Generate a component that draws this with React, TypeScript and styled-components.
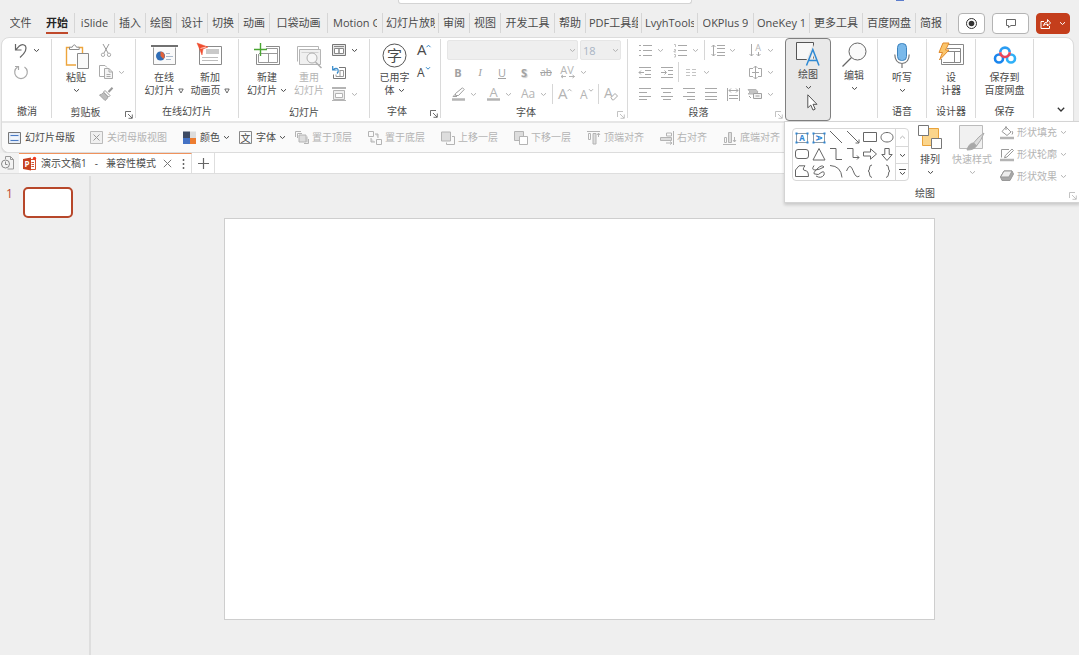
import React from 'react';
import styled, { createGlobalStyle, css } from 'styled-components';

const Global = createGlobalStyle`
  * { box-sizing: border-box; }
  html, body { margin: 0; background: #efefef; overflow-x: hidden; }
  body, button, select {
    font-family: "Open Sans", "Noto Sans CJK SC", sans-serif;
    font-size: 10px;
    line-height: 13px;
    color: #4a4a4a;
  }
  button { border: 0; padding: 0; margin: 0; background: none; white-space: nowrap; }
  button:disabled { color: #b4b4b4; }
`;

/* ---------- icon base ---------- */

const Svg = styled.svg`
  display: block;
  flex: none;
  fill: none;
  stroke: currentColor;
  stroke-width: 1;
  overflow: visible;
  text {
    stroke: none;
    fill: currentColor;
  }
`;

type IconProps = { w: number; h: number; children: React.ReactNode };
const Icon = ({ w, h, children }: IconProps) => (
  <Svg width={w} height={h} viewBox={`0 0 ${w} ${h}`} aria-hidden="true">
    {children}
  </Svg>
);

const Chevron = () => (
  <Icon w={7} h={5}>
    <path d="M1 1.2l2.5 2.3L6 1.2" />
  </Icon>
);
const Triangle = () => (
  <Icon w={6} h={6}>
    <path d="M.8 1h4.4L3 5z" strokeWidth=".8" />
  </Icon>
);

/* ---------- page frame ---------- */

const Page = styled.div`
  min-height: 100vh;
  display: flex;
  flex-direction: column;
`;

const TitleBar = styled.div`
  display: flex;
  height: 12px;
`;
const TitleSide = styled.div<{ $grow: number }>`
  flex: ${(p) => p.$grow} 1 0;
`;
const SearchEdge = styled.div`
  flex: 0 0 294px;
  height: 4px;
  background: #fff;
  border: 1px solid #d4d4d4;
  border-top: 0;
  border-radius: 0 0 3px 3px;
`;
const Avatar = styled.div`
  width: 8px;
  height: 1px;
  margin-left: 204px;
  background: #5b7ccc;
`;

const TabRow = styled.nav`
  display: flex;
  align-items: flex-start;
  height: 25px;
  padding: 1px 9px 0 1px;
`;
const Tab = styled.button<{ $w: number; $clip: number; $line: boolean; $active?: boolean }>`
  flex: 0 0 ${(p) => p.$w}px;
  height: 20px;
  font-size: 11px;
  line-height: 20px;
  display: flex;
  justify-content: center;
  border-right: ${(p) => (p.$line ? '1px solid #d6d6d6' : '0')};
  ${(p) =>
    p.$active &&
    css`
      font-weight: 700;
      color: #262626;
      span { border-bottom: 2px solid #c0492b; }
    `}
  span {
    display: block;
    height: 21px;
    max-width: ${(p) => p.$clip}px;
    overflow: hidden;
  }
`;
const WindowActions = styled.div`
  display: flex;
  gap: 7px;
  margin-left: auto;
`;
const ActionButton = styled.button<{ $w: number; $primary?: boolean }>`
  display: flex;
  align-items: center;
  justify-content: center;
  gap: 8px;
  width: ${(p) => p.$w}px;
  height: 21px;
  border-radius: 4px;
  border: 1px solid ${(p) => (p.$primary ? '#c43e1c' : '#b4b4b4')};
  background: ${(p) => (p.$primary ? '#c43e1c' : '#fff')};
  color: ${(p) => (p.$primary ? '#fff' : '#333')};
`;

const RibbonCard = styled.section`
  margin: 0 5px 0 1px;
  background: #fff;
  border: 1px solid #dcdcdc;
  border-radius: 8px;
  box-shadow: 0 1px 1px rgba(0, 0, 0, 0.08);
`;
const Groups = styled.div`
  display: flex;
  height: 83px;
  padding-left: 1px;
`;
const GroupBox = styled.div<{ $w: number; $line: boolean }>`
  flex: 0 0 ${(p) => p.$w}px;
  display: flex;
  flex-direction: column;
  margin: 1px 0 3px;
  border-right: ${(p) => (p.$line ? '1px solid #dadada' : '0')};
`;
const GroupBody = styled.div<{ $pad: number; $center: boolean }>`
  display: flex;
  height: 66px;
  padding-left: ${(p) => p.$pad}px;
  justify-content: ${(p) => (p.$center ? 'center' : 'flex-start')};
`;
const GroupFoot = styled.div`
  display: flex;
  align-items: center;
  padding-top: 1px;
  span { flex: 1; text-align: center; }
`;
const Launcher = styled.button`
  flex: 0 0 16px;
  display: flex;
  justify-content: center;
  padding: 4px 0 0 3px;
`;
const LauncherIcon = () => (
  <Icon w={8} h={8}>
    <path d="M.5 6V.5H6M3 3l4 4M7.3 3.500v3.800H3.500" strokeWidth=".8" />
  </Icon>
);

type GroupProps = {
  w: number;
  label?: string;
  pad?: number;
  center?: boolean;
  line?: boolean;
  launcher?: 'on' | 'off';
  children: React.ReactNode;
};
const Group = ({ w, label, pad = 0, center = false, line = true, launcher, children }: GroupProps) => (
  <GroupBox $w={w} $line={line}>
    <GroupBody $pad={pad} $center={center}>{children}</GroupBody>
    <GroupFoot>
      <span>{label}</span>
      {launcher && (
        <Launcher aria-label={`${label}设置`} disabled={launcher === 'off'}>
          <LauncherIcon />
        </Launcher>
      )}
    </GroupFoot>
  </GroupBox>
);

const BigButton = styled.button<{ $w: number; $tight?: boolean }>`
  width: ${(p) => p.$w}px;
  padding-top: 4px;
  display: flex;
  flex-direction: column;
  align-items: center;
  > div {
    height: ${(p) => (p.$tight ? 26 : 28)}px;
    flex: none;
  }
`;
const Line = styled.span`
  display: flex;
  align-items: center;
  justify-content: center;
  gap: 3px;
  height: 13px;
`;

const Stack = styled.div`
  display: flex;
  flex-direction: column;
`;
const Row = styled.div`
  display: flex;
  align-items: center;
  height: 22px;
`;
const Small = styled.button<{ $caret?: boolean }>`
  display: grid;
  grid-template-columns: 22px ${(p) => (p.$caret ? '8px' : '')};
  place-items: center;
  height: 22px;
  margin-right: ${(p) => (p.$caret ? 5 : 0)}px;
`;
const Divider = styled.div`
  width: 1px;
  height: 20px;
  margin-right: 1px;
  background: #d6d6d6;
`;
const Combo = styled.div<{ $w: number }>`
  display: grid;
  width: ${(p) => p.$w}px;
  height: 20px;
  margin-right: 2px;
  align-items: center;
  color: #b4b4b4;
  select {
    grid-area: 1 / 1;
    appearance: none;
    width: 100%;
    height: 20px;
    padding: 0 2px;
    border: 1px solid #e6e6e6;
    border-radius: 2px;
    background: #efefef;
    color: #a8b4c4;
    opacity: 1;
    font-size: 11px;
  }
  svg { grid-area: 1 / 1; justify-self: end; margin-right: 2px; }
`;
const Letter = styled.span<{ $kind: 'b' | 'i' | 'u' | 's' | 'ab' }>`
  font-size: ${(p) => (p.$kind === 'ab' ? 10 : 11)}px;
  color: #a2a2a2;
  font-weight: ${(p) => (p.$kind === 'b' || p.$kind === 's' ? 700 : 400)};
  font-style: ${(p) => (p.$kind === 'i' ? 'italic' : 'normal')};
  font-family: ${(p) => (p.$kind === 'i' ? '"Liberation Serif", serif' : 'inherit')};
  text-decoration: ${(p) => (p.$kind === 'u' ? 'underline' : p.$kind === 'ab' ? 'line-through' : 'none')};
  text-shadow: ${(p) => (p.$kind === 's' ? '1px 1px 1px #ccc' : 'none')};
`;

/* ---------- drawing button and flyout ---------- */

const DrawingWrap = styled.div`
  position: relative;
  flex: 0 0 46px;
  z-index: 2;
`;
const DrawingButton = styled.button`
  width: 100%;
  height: 83px;
  padding-top: 3px;
  display: flex;
  flex-direction: column;
  align-items: center;
  background: #e9e9e9;
  border: 1px solid #808080;
  border-radius: 4px;
  > div { height: 26px; flex: none; }
  > svg:last-child { margin: 0 0 0 8px; }
`;
const Flyout = styled.div`
  position: absolute;
  top: 100%;
  left: -1px;
  width: 296px;
  height: 82px;
  padding-left: 7px;
  background: #fff;
  border: 1px solid #d4d4d4;
  box-shadow: 0 2px 3px rgba(0, 0, 0, 0.16);
`;
const FlyoutBody = styled.div`
  display: flex;
  align-items: flex-start;
  height: 65px;
`;
const Gallery = styled.div`
  display: flex;
  height: 53px;
  margin-top: 6px;
  border: 1px solid #d8d8d8;
  border-radius: 4px;
`;
const Shapes = styled.div`
  display: grid;
  grid-template-columns: repeat(6, 17px);
  grid-auto-rows: 17px;
  button { display: grid; place-items: center; color: #666; }
`;
const Scroller = styled.div`
  display: grid;
  grid-template-rows: repeat(3, 17px);
  width: 13px;
  border-left: 1px solid #d8d8d8;
  button { display: grid; place-items: center; }
  button + button { border-top: 1px solid #d8d8d8; }
`;
const FlyoutBig = styled.button<{ $w: number }>`
  width: ${(p) => p.$w}px;
  padding-top: 3px;
  display: flex;
  flex-direction: column;
  align-items: center;
  > div { height: 28px; flex: none; }
  > svg { margin-top: 4px; }
`;
const Effects = styled.div`
  display: flex;
  flex-direction: column;
  gap: 2px;
  padding-left: 7px;
`;
const Effect = styled.button`
  display: flex;
  align-items: center;
  gap: 3px;
  height: 20px;
`;
const FlyoutFoot = styled.div`
  display: flex;
  align-items: center;
  justify-content: space-between;
  padding-left: 123px;
`;

/* ---------- quick toolbar ---------- */

const QuickBar = styled.div`
  display: flex;
  align-items: center;
  height: 31px;
  padding-left: 6px;
  border-top: 2px solid #e6e6e6;
  border-radius: 0 0 8px 8px;
  background: #fafafa;
`;
const QuickItem = styled.button<{ $space: number }>`
  display: flex;
  align-items: center;
  gap: 3px;
  height: 20px;
  margin-right: ${(p) => p.$space}px;
`;

/* ---------- document tabs and workspace ---------- */

const DocBar = styled.div`
  display: flex;
  align-items: center;
  height: 21px;
  background: #fff;
  border-bottom: 1px solid #dedede;
`;
const HistoryButton = styled.button`
  flex: 0 0 19px;
  height: 20px;
  display: flex;
  align-items: center;
  padding-left: 1px;
  background: #f3f3f3;
`;
const DocTab = styled.div`
  display: flex;
  align-items: center;
  width: 173px;
  height: 20px;
  padding: 0 6px 0 4px;
  border-top: 1px solid #f0925c;
  border-right: 1px solid #dedede;
`;
const DocName = styled.button`
  display: flex;
  align-items: center;
  gap: 8px;
  margin: 0 auto 0 5px;
`;
const AddDoc = styled.button`
  width: 23px;
  height: 20px;
  display: grid;
  place-items: center;
  border-right: 1px solid #dedede;
  color: #666;
`;
const Workspace = styled.main`
  flex: 1;
  display: flex;
  padding-top: 2px;
`;
const ThumbPane = styled.aside`
  flex: 0 0 91px;
  display: flex;
  align-items: flex-start;
  gap: 10px;
  padding: 11px 0 0 6px;
  border-right: 2px solid #dedede;
  color: #c0472c;
  font-size: 12px;
`;
const Thumb = styled.button`
  width: 50px;
  height: 31px;
  background: #fff;
  border: 2px solid #b7472a;
  border-radius: 5px;
`;
const Stage = styled.div`
  flex: 1;
  padding: 42px 144px 34px 133px;
`;
const Slide = styled.div`
  aspect-ratio: 711 / 402;
  background: #fff;
  border: 1px solid #cecece;
`;

/* ---------- icons ---------- */

const g = '#8a8a8a';

const PasteIcon = () => (
  <Icon w={24} h={26}>
    <path d="M5 4.500H1.500v17.500H11M13.500 4.500h4V11" stroke="#eda53c" strokeWidth="1.400" />
    <path d="M4.500 6.500V4.200h2.700Q9.300 -.5 11.500 4.200h2.700v2.300z" stroke={g} fill="#fff" />
    <path d="M12.500 10.500h11v15h-11z" stroke={g} fill="#fafafa" />
  </Icon>
);
const OnlineIcon = () => (
  <Icon w={27} h={21}>
    <path d="M2.500 2.500v17h22v-17" stroke="#9a9a9a" fill="#fafafa" />
    <path d="M0 1h27" stroke="#707070" strokeWidth="2" />
    <circle cx="9.500" cy="11" r="4.500" fill="#2f6db5" stroke="none" />
    <path d="M9.500 11V6.500A4.500 4.500 0 0 1 12.500 14z" fill="#e2623a" stroke="none" />
    <path d="M15 8.500h4M15 11.500h7M15 14.500h5" stroke="#a9b9cc" />
  </Icon>
);
const AnimPageIcon = () => (
  <Icon w={26} h={24}>
    <path d="M2.500 3.500h22v18h-22z" stroke={g} fill="#fff" />
    <path d="M9 6h13v5H9z" fill="#c9c9c9" stroke="none" />
    <path d="M5 14.500h16M5 17.500h16" stroke="#bdbdbd" />
    <path d="M0 0l11 4-5 2-1 6-2-5z" fill="#f04e30" stroke="#f04e30" strokeWidth=".5" />
    <path d="M3.500 5.500L9 4" stroke="#fff" strokeWidth=".7" />
  </Icon>
);
const NewSlideIcon = () => (
  <Icon w={26} h={24}>
    <path d="M12 3.500h13.500v18h-23V11" stroke={g} />
    <path d="M4.500 11v8.500h19v-14H12M5 10.500h18.500M14.500 10.500v9" stroke="#999" />
    <path d="M6.500 0v13M0 6.500h13" stroke="#4aa532" strokeWidth="1.400" />
  </Icon>
);
const ReuseIcon = () => (
  <Icon w={25} h={22}>
    <path d="M.5 15.500V.5h21V3" stroke="#b5b5b5" />
    <path d="M2.500 3.500h21v15h-21z" fill="#f0f0f0" stroke="#b5b5b5" />
    <path d="M4.500 6.500h17M12.500 6.500v10" stroke="#d2d2d2" />
    <circle cx="15" cy="12" r="5" fill="#f7f7f7" stroke="#b0b0b0" />
    <path d="M18.500 16l6 6" stroke="#b0b0b0" strokeWidth="1.500" />
  </Icon>
);
const LayoutIcon = () => (
  <Icon w={14} h={12}>
    <path d="M.5 .5h13v11H.5z" stroke="#777" fill="#e6e6e6" />
    <path d="M2.500 4.500h4.500v5H2.500zM7 4.500h4.500v5H7z" stroke="#888" fill="#fff" />
    <path d="M2 2.500h10" stroke="#888" />
  </Icon>
);
const ResetIcon = () => (
  <Icon w={14} h={13}>
    <path d="M7 1.500h6.500v11H1.500V8.500" stroke="#777" />
    <path d="M7.500 4.500h4v6H4v-2M8 4.500v6" stroke="#999" />
    <path d="M.7 0v4h4M1 4Q4 .8 6 3.500 6.800 5.500 5 7.500" stroke="#2f86c8" strokeWidth="1.200" />
  </Icon>
);
const SectionIcon = () => (
  <Icon w={14} h={14}>
    <path d="M0 1h14" stroke="#b4b4b4" strokeWidth="2" />
    <path d="M1.500 3.500h11v9h-11z" stroke="#b4b4b4" fill="#eee" />
    <path d="M3.500 6.500h7v4h-7z" stroke="#b4b4b4" fill="#fff" />
    <path d="M0 13.500h14" stroke="#b4b4b4" />
  </Icon>
);
const UsedFontIcon = () => (
  <Icon w={25} h={25}>
    <circle cx="12.500" cy="12.500" r="11.500" stroke="#555" />
    <text x="12.500" y="18" fontSize="15" textAnchor="middle">字</text>
  </Icon>
);

type GlyphProps = { size: number; up: boolean; blue?: boolean };
const SizedA = ({ size, up, blue }: GlyphProps) => (
  <Icon w={14} h={13}>
    <text x="0" y="11" fontSize={size}>A</text>
    <path d={up ? 'M9.500 3.200l2-2 2 2' : 'M9 1.200l2 2 2-2'} stroke={blue ? '#2f86c8' : 'currentColor'} />
  </Icon>
);

const lineSets: Record<string, string> = {
  left: 'M0 .5h12M0 4.500h8M0 8.500h12M0 11.500h8',
  center: 'M0 .5h12M2 4.500h8M0 8.500h12M2 11.500h8',
  right: 'M0 .5h12M4 4.500h8M0 8.500h12M4 11.500h8',
  justify: 'M0 .5h12M0 4.500h12M0 8.500h12M0 11.500h12',
  bullets: 'M4 1.500h9M4 6.500h9M4 11.500h9M0 1.500h2M0 6.500h2M0 11.500h2',
  spacing: 'M6 1.500h8M6 4.500h8M6 8.500h8M6 11.500h8M2.500 1v11M.5 3l2-2 2 2M.5 10l2 2 2-2',
  outdent: 'M0 1.500h12M6 4.500h6M6 8.500h6M0 11.500h12M0 6.500h5M2 4.500l-2 2 2 2',
  indent: 'M0 1.500h12M7 4.500h5M7 8.500h5M0 11.500h12M0 6.500h5M3.500 4.500l2 2-2 2',
  columns: 'M1 3.500h4M1 6.500h4M1 9.500h4M7 3.500h4M7 6.500h4M7 9.500h4',
  distribute: 'M.5 0v13M12.500 0v13M2 2.500h9M4 .5l-2 2 2 2M9 .5l2 2-2 2M2 7.500h9M2 10.500h9',
  valign: 'M4 2.500H.5v8H4M9 2.500h3.500v8H9M6.500 0v13M4.500 2l2-2 2 2M4.500 11l2 2 2-2M3 6.500h7',
};
const Lines = ({ name }: { name: string }) => (
  <Icon w={13} h={13}>
    <path d={lineSets[name]} stroke={name === 'columns' ? '#c4c4c4' : '#a8a8a8'} />
  </Icon>
);
const NumberIcon = () => (
  <Icon w={13} h={13}>
    <path d="M4 1.500h9M4 6.500h9M4 11.500h9" stroke="#a8a8a8" />
    <path d="M0 .5h1.500v2.500M0 5.500h1.500v1.500H0v1h2M0 10.500h1.500v2.500H0" stroke="#b4b4b4" strokeWidth=".8" />
  </Icon>
);

const DrawIcon = () => (
  <Icon w={24} h={24}>
    <path d="M.5 .5h17v17H.5z" stroke="#555" fill="#f7f7f7" />
    <path d="M10.500 23.500L16.800 7.500 23 23.500M12.700 18.500h8.200" stroke="#e9e9e9" strokeWidth="4" />
    <path d="M10.500 23.500L16.800 7.500 23 23.500M12.700 18.500h8.200" stroke="#2f8ad4" strokeWidth="1.500" />
  </Icon>
);
const CursorIcon = () => (
  <Icon w={11} h={17}>
    <path d="M.8 .8v13l3-2.700 2.200 5 2.200-1-2.200-4.800h4z" fill="#fff" stroke="#555" />
  </Icon>
);
const SearchIcon = () => (
  <Icon w={25} h={25}>
    <circle cx="15.500" cy="8.500" r="8.500" stroke="#666" fill="#fafafa" />
    <path d="M9.500 14.500L.5 23.500" stroke="#666" strokeWidth="1.200" />
  </Icon>
);
const MicIcon = () => (
  <Icon w={16} h={25}>
    <rect x="3.500" y=".5" width="9" height="17" rx="4" fill="#7ab9ea" stroke="#3c82bd" />
    <path d="M.8 11.500Q1 20 8 20.500 15 20 15.200 11.500M8 20.500V25" stroke="#777" strokeWidth="1.200" />
  </Icon>
);
const DesignerIcon = () => (
  <Icon w={26} h={24}>
    <path d="M9 1.500h16.500v20h-22V16M5 19.500h17.500v-14H9M9 8.500h13.500M16.500 8.500v11" stroke="#888" />
    <path d="M5 0L1 9.500h3.500L1.500 17 11 7H7.500L11 0z" fill="#fbc56b" stroke="#e08a2c" />
  </Icon>
);
const BaiduIcon = () => (
  <Icon w={22} h={18}>
    <path d="M6.300 6.300a4.700 4.700 0 0 1 9.400 0" stroke="#2a9cf2" strokeWidth="2.600" />
    <circle cx="5" cy="12.500" r="4" stroke="#1a86ee" strokeWidth="2.600" />
    <circle cx="17" cy="12.500" r="4" stroke="#2fb0f8" strokeWidth="2.600" />
    <path d="M6.300 6.300a4.700 4.700 0 0 0 9.400 0" stroke="#ee4458" strokeWidth="2.600" />
  </Icon>
);

const ArrangeIcon = () => (
  <Icon w={25} h={24}>
    <path d="M4.500 3.500h16v17h-16z" fill="#fbd58b" stroke="#e9a23a" />
    <path d="M.5 .5h10v10H.5zM13.500 13.500h10v10h-10z" fill="#fff" stroke="#777" />
  </Icon>
);
const QuickStyleIcon = () => (
  <Icon w={26} h={26}>
    <path d="M.5 .5h23v23H.5z" fill="#f1f1f1" stroke="#bbb" />
    <path d="M25 8Q20 11 14.500 18l3 3Q22 16 25 8z" fill="#ddd" stroke="#aaa" />
    <path d="M14.500 18Q10 18 8 25q7 0 9.500-4z" fill="#a8a8a8" stroke="#a8a8a8" />
  </Icon>
);
const FillIcon = () => (
  <Icon w={14} h={13}>
    <path d="M6 1l5 5-4 3.500L2 5.500zM6 4V0M12 5q1.500 2 0 3.500" stroke="#999" />
    <path d="M0 12h14" stroke="#b4b4b4" strokeWidth="2.500" />
  </Icon>
);
const OutlineIcon = () => (
  <Icon w={14} h={13}>
    <path d="M9 1.500H1.500v8M12 1l1.500 1.500L7 9l-2.500.8.800-2.300z" stroke="#999" />
    <path d="M0 12h14" stroke="#b4b4b4" strokeWidth="2.500" />
  </Icon>
);
const EffectIcon = () => (
  <Icon w={14} h={12}>
    <path d="M4 1h8l1.500 3-3.500 6.500H2L.5 7z" fill="#a8a8a8" stroke="#999" />
    <path d="M4 1h8L9 7H.5z" fill="#eee" stroke="#999" />
  </Icon>
);

const BlueText = styled.text`
  && { fill: #2f86d4; }
`;
const TextBoxIcon = ({ turned }: { turned?: boolean }) => (
  <Icon w={14} h={12}>
    <path d="M1.500 1.500h11v9h-11z" stroke="#8d9aa6" />
    <path d="M.5 1.500h2M11.500 1.500h2M.5 10.500h2M11.500 10.500h2" stroke="#2f86d4" strokeWidth="2" />
    <BlueText x="7" y="9" fontSize="8" fontWeight="700" textAnchor="middle" transform={turned ? 'rotate(90 7 6)' : undefined}>
      A
    </BlueText>
  </Icon>
);
const shapePaths: [string, string][] = [
  ['直线', 'M1 0l12 12'],
  ['箭头', 'M1 0l12 12M13 8.500v3.500H9.500'],
  ['矩形', 'M.5 1.500h13v9H.5z'],
  ['椭圆', 'M7 1.500c8 0 8 9.500 0 9.500s-8-9.500 0-9.500z'],
  ['圆角矩形', 'M3 1.500h8q2.500 0 2.500 2.500v4q0 2.500-2.500 2.500H3Q.5 10.500 .5 8V4Q.5 1.500 3 1.500z'],
  ['三角形', 'M7 .5l6 11.500H1z'],
  ['肘形连接符', 'M1 .5h6v11h6'],
  ['肘形箭头', 'M1 .5h6v9h6M11 7.500l2 2-2 2'],
  ['右箭头', 'M.5 4h7V.8L13.500 6l-6 5.200V8h-7z'],
  ['下箭头', 'M4.800 .5h4.400v6h3L7 12.500 1.800 6.500h3z'],
  ['任意多边形', 'M.5 11.500V5L4 .8h6Q6.500 5 10 5.500q3.500 0 3.500 6z'],
  ['自由曲线', 'M2 .5Q-1 5 3 5T12 2Q10-1 5 4T3 9q3 2 7-2 3-1 2 3-3 4-8 1'],
  ['弧形', 'M1 .5Q12 1 13 12.500'],
  ['曲线', 'M.5 6Q4-3 7 5.500T13.500 11'],
  ['左大括号', 'M9 0Q6.500 0 6.500 3T5 6q1.500 0 1.500 3T9 12.500'],
  ['右大括号', 'M6 0q2.500 0 2.500 3T10 6Q8.500 6 8.500 9T6 12.500'],
];

/* ---------- data ---------- */

const tabs: { t: string; w: number; clip?: number; line?: boolean; active?: boolean }[] = [
  { t: '文件', w: 39, line: false },
  { t: '开始', w: 35, active: true },
  { t: 'iSlide', w: 40 },
  { t: '插入', w: 31 },
  { t: '绘图', w: 31 },
  { t: '设计', w: 31 },
  { t: '切换', w: 31 },
  { t: '动画', w: 31 },
  { t: '口袋动画', w: 58 },
  { t: 'Motion Go', w: 55, clip: 44 },
  { t: '幻灯片放映', w: 56 },
  { t: '审阅', w: 31 },
  { t: '视图', w: 31 },
  { t: '开发工具', w: 54 },
  { t: '帮助', w: 31 },
  { t: 'PDF工具组', w: 56 },
  { t: 'LvyhTools', w: 56 },
  { t: 'OKPlus 9', w: 56 },
  { t: 'OneKey 1', w: 56 },
  { t: '更多工具', w: 53 },
  { t: '百度网盘', w: 53 },
  { t: '简报', w: 31 },
];

const quickItems: { t: string; off?: boolean; caret?: boolean; icon: React.ReactNode }[] = [
  { t: '幻灯片母版', icon: <><path d="M.5 1.500h12v11H.5z" stroke="#777" fill="#e4ecf7" /><path d="M2.500 4.500h8M2.500 9.500h8" stroke="#4a7ac4" /><path d="M2.500 7h8" stroke="#fff" /></> },
  { t: '关闭母版视图', off: true, icon: <><path d="M.5 .5h12v12H.5z" fill="#f0f0f0" stroke="#bbb" /><path d="M3.500 3.500l6 6M9.500 3.500l-6 6" stroke="#999" /></> },
  { t: '颜色', caret: true, icon: <g stroke="none"><path d="M0 .5h7v6.500H0z" fill="#3d4a63" /><path d="M7 .5h6v6.500H7z" fill="#dcdcdc" /><path d="M0 7h7v6H0z" fill="#4472c4" /><path d="M7 7h6v6H7z" fill="#ed7d31" /></g> },
  { t: '字体', caret: true, icon: <><path d="M.5 .5h12v12H.5z" stroke="#888" /><text x="6.500" y="10.500" fontSize="10" textAnchor="middle">文</text></> },
  { t: '置于顶层', off: true, icon: <><path d="M.5 6V.5H6M2.500 7V2.500H7M9 12.500h4.500V8M12 5.500v6" /><path d="M4 4h7v7H4z" fill="#ddd" /></> },
  { t: '置于底层', off: true, icon: <><path d="M.5 .5h5v5h-5zM8.500 8.500h5v5h-5z" /><path d="M7 3h3v4M3 7v4h4" fill="#ddd" /></> },
  { t: '上移一层', off: true, icon: <><path d="M.5 1h9v9h-9z" fill="#ddd" /><path d="M11 5.500h2.500v8H5.500V11.500" /></> },
  { t: '下移一层', off: true, icon: <><path d="M.5 .5h9v9h-9z" fill="#ddd" /><path d="M5.500 5.500h8v8h-8z" fill="#fff" /></> },
  { t: '顶端对齐', off: true, icon: <><path d="M0 .5h13M1.500 2.500h2v6h-2z" /><path d="M6 2.500h3V13H6z" fill="#ddd" /><path d="M11.500 6V2M10 4l1.500-2L13 4" /></> },
  { t: '右对齐', off: true, icon: <><path d="M13.500 0v14M6.500 2h5v3h-5z" /><path d="M.5 6.500h11v3H.5z" fill="#ddd" /><path d="M6 12h6M10 10.500l2 1.500-2 1.500" /></> },
  { t: '底端对齐', off: true, icon: <><path d="M0 13.500h13M1.500 6.500h2v5h-2z" /><path d="M5.500 1.500h3v10h-3z" fill="#ddd" /><path d="M11.500 6v5M10 9l1.500 2L13 9" /></> },
];

const letters: [string, 'b' | 'i' | 'u' | 's' | 'ab', string][] = [
  ['B', 'b', '加粗'],
  ['I', 'i', '倾斜'],
  ['U', 'u', '下划线'],
  ['S', 's', '文字阴影'],
  ['ab', 'ab', '删除线'],
];

type SmallProps = { label: string; caret?: boolean; off?: boolean; children: React.ReactNode };
const SmallButton = ({ label, caret, off = true, children }: SmallProps) => (
  <Small aria-label={label} disabled={off} $caret={caret}>
    {children}
    {caret && <Chevron />}
  </Small>
);

const MoreButton = styled.button`
  margin-left: 10px;
`;
const CollapseButton = styled.button`
  margin: auto 8px 9px auto;
  color: #333;
`;
const WhiteText = styled.text`
  && { fill: #fff; }
`;

/* ---------- app ---------- */

export default function App() {
  return (
    <Page>
      <Global />
      <TitleBar>
        <TitleSide $grow={398} />
        <SearchEdge />
        <TitleSide $grow={387}>
          <Avatar />
        </TitleSide>
      </TitleBar>

      <TabRow>
        {tabs.map((tab) => (
          <Tab key={tab.t} $w={tab.w} $clip={tab.clip ?? 49} $line={tab.line !== false} $active={tab.active}>
            <span>{tab.t}</span>
          </Tab>
        ))}
        <WindowActions>
          <ActionButton $w={27} aria-label="录制">
            <Icon w={11} h={11}>
              <circle cx="5.500" cy="5.500" r="5" />
              <circle cx="5.500" cy="5.500" r="2.800" fill="#333" stroke="none" />
            </Icon>
          </ActionButton>
          <ActionButton $w={37} aria-label="批注">
            <Icon w={10} h={9}>
              <path d="M.5 .5h9v6H5L2.500 8.500v-2h-2z" stroke="#666" />
            </Icon>
          </ActionButton>
          <ActionButton $w={34} $primary aria-label="共享">
            <Icon w={11} h={11}>
              <path d="M4 3.500H1v7h8.500V8M3.500 7.500Q4 4 7.500 4V1.500L10.500 5 7.500 8V6Q5 6 3.500 7.500z" />
            </Icon>
            <Chevron />
          </ActionButton>
        </WindowActions>
      </TabRow>

      <RibbonCard>
        <Groups>
          <Group w={49} label="撤消" pad={7}>
            <Stack>
              <SmallButton label="撤消" caret off={false}>
                <Icon w={14} h={15}>
                  <path d="M1.500 1v6H7.500M1.500 7L5 3.300Q8.500 0 11.500 3 14 7.500 6 14.500" stroke="#666" strokeWidth="1.200" />
                </Icon>
              </SmallButton>
              <SmallButton label="恢复">
                <Icon w={14} h={14}>
                  <path d="M3.500 2A6.300 6.300 0 1 0 10.500 2M1 1.500h3.500V5" stroke="#a8a8a8" strokeWidth="1.200" />
                </Icon>
              </SmallButton>
            </Stack>
          </Group>

          <Group w={84} label="剪贴板" pad={5} launcher="on">
            <BigButton $w={38}>
              <div><Icon w={22} h={26}><PasteIcon /></Icon></div>
              <Line>粘贴</Line>
              <Line><Chevron /></Line>
            </BigButton>
            <Stack>
              <SmallButton label="剪切">
                <Icon w={10} h={13}>
                  <path d="M2 0l5 9M8 0L3 9" stroke="#999" />
                  <circle cx="2" cy="10.800" r="1.700" stroke="#aaa" />
                  <circle cx="8" cy="10.800" r="1.700" stroke="#aaa" />
                </Icon>
              </SmallButton>
              <SmallButton label="复制" caret>
                <Icon w={14} h={14}>
                  <path d="M5 11.500H.5V.5H6L8 2.500" stroke="#aaa" />
                  <path d="M5.500 3.500H10L13.500 7v6.500h-8z" stroke="#aaa" fill="#f4f4f4" />
                  <path d="M10 3.500V7h3.500M7.500 9.500h4M7.500 11.500h4" stroke="#aaa" />
                </Icon>
              </SmallButton>
              <SmallButton label="格式刷">
                <Icon w={14} h={14}>
                  <path d="M13.500 .8L9.500 5" stroke="#999" strokeWidth="2" />
                  <path d="M6 3.500l5 5-1.500 1.500-5-5z" fill="#fff" stroke="#999" />
                  <path d="M4.500 5.500Q3 7.500 .5 8l5.500 5.500Q8 12.500 9 10z" fill="#bdbdbd" stroke="#a4a4a4" />
                </Icon>
              </SmallButton>
            </Stack>
          </Group>

          <Group w={103} label="在线幻灯片" pad={5}>
            <BigButton $w={46}>
              <div><Icon w={27} h={24}><g transform="translate(0 2)"><OnlineIcon /></g></Icon></div>
              <Line>在线</Line>
              <Line>幻灯片<Triangle /></Line>
            </BigButton>
            <BigButton $w={46}>
              <div><AnimPageIcon /></div>
              <Line>新加</Line>
              <Line>动画页<Triangle /></Line>
            </BigButton>
          </Group>

          <Group w={131} label="幻灯片" pad={5}>
            <BigButton $w={46}>
              <div><NewSlideIcon /></div>
              <Line>新建</Line>
              <Line>幻灯片<Chevron /></Line>
            </BigButton>
            <BigButton $w={38} disabled>
              <div><Icon w={25} h={26}><g transform="translate(0 3)"><ReuseIcon /></g></Icon></div>
              <Line>重用</Line>
              <Line>幻灯片</Line>
            </BigButton>
            <Stack>
              <SmallButton label="版式" caret off={false}><LayoutIcon /></SmallButton>
              <SmallButton label="重置" off={false}><ResetIcon /></SmallButton>
              <SmallButton label="节" caret><SectionIcon /></SmallButton>
            </Stack>
          </Group>

          <Group w={71} label="字体" pad={6} launcher="on">
            <BigButton $w={37}>
              <div><UsedFontIcon /></div>
              <Line>已用字</Line>
              <Line>体<Chevron /></Line>
            </BigButton>
            <Stack>
              <SmallButton label="增大字号" off={false}><SizedA size={15} up blue /></SmallButton>
              <SmallButton label="减小字号" off={false}><SizedA size={12} up={false} blue /></SmallButton>
            </Stack>
          </Group>

          <Group w={187} label="字体" pad={6} launcher="off">
            <Stack>
              <Row>
                <Combo $w={131}>
                  <select aria-label="字体" disabled><option> </option></select>
                  <Chevron />
                </Combo>
                <Combo $w={41}>
                  <select aria-label="字号" disabled><option>18</option></select>
                  <Chevron />
                </Combo>
              </Row>
              <Row>
                {letters.map(([t, k, label]) => (
                  <SmallButton key={k} label={label}><Letter $kind={k}>{t}</Letter></SmallButton>
                ))}
                <SmallButton label="字符间距" caret>
                  <Icon w={14} h={13}>
                    <text x="6" y="8" fontSize="11" textAnchor="middle">AV</text>
                    <path d="M0 10.500h5M8 10.500h5.500M2 9l-2 1.500L2 12M11.500 9l2 1.500-2 1.500" />
                  </Icon>
                </SmallButton>
              </Row>
              <Row>
                <SmallButton label="突出显示颜色" caret>
                  <Icon w={13} h={14}>
                    <path d="M10.500 .8l1.700 1.700L6.500 8.500H3.500V6.500zM3.500 7L1 9.500h4" stroke="#a0a0a0" />
                    <path d="M0 12.500h13" stroke="#b4b4b4" strokeWidth="2.500" />
                  </Icon>
                </SmallButton>
                <SmallButton label="字体颜色" caret>
                  <Icon w={13} h={14}>
                    <text x="6.500" y="9.500" fontSize="13" textAnchor="middle">A</text>
                    <path d="M0 12.500h13" stroke="#b4b4b4" strokeWidth="2.500" />
                  </Icon>
                </SmallButton>
                <SmallButton label="更改大小写" caret>
                  <Icon w={15} h={13}><text x="7" y="10" fontSize="12" textAnchor="middle">Aa</text></Icon>
                </SmallButton>
                <Divider />
                <SmallButton label="增大"><SizedA size={15} up /></SmallButton>
                <SmallButton label="减小"><SizedA size={12} up={false} /></SmallButton>
                <Divider />
                <SmallButton label="清除格式">
                  <Icon w={14} h={14}>
                    <text x="0" y="11" fontSize="14">A</text>
                    <path d="M7 10.500l4-4 2.500 2.500-4 4H8.500z" fill="#fff" stroke="#a8a8a8" />
                  </Icon>
                </SmallButton>
              </Row>
            </Stack>
          </Group>

          <Group w={157} label="段落" pad={6} launcher="off" line={false}>
            <Stack>
              <Row>
                <SmallButton label="项目符号" caret><Lines name="bullets" /></SmallButton>
                <SmallButton label="编号" caret><NumberIcon /></SmallButton>
                <Divider />
                <SmallButton label="行距" caret><Lines name="spacing" /></SmallButton>
              </Row>
              <Row>
                <SmallButton label="减少缩进"><Lines name="outdent" /></SmallButton>
                <SmallButton label="增加缩进"><Lines name="indent" /></SmallButton>
                <Divider />
                <SmallButton label="分栏" caret><Lines name="columns" /></SmallButton>
              </Row>
              <Row>
                {['left', 'center', 'right', 'justify', 'distribute'].map((n) => (
                  <SmallButton key={n} label={n}><Lines name={n} /></SmallButton>
                ))}
              </Row>
            </Stack>
            <Stack>
              <SmallButton label="文字方向" caret>
                <Icon w={13} h={14}>
                  <path d="M2.500 1v12M.5 11l2 2 2-2M9.500 9v4M7.500 11l2 2 2-2" stroke="#a8a8a8" />
                  <text x="9" y="8" fontSize="9" textAnchor="middle">A</text>
                </Icon>
              </SmallButton>
              <SmallButton label="对齐文本" caret><Lines name="valign" /></SmallButton>
              <SmallButton label="转换为 SmartArt" caret>
                <Icon w={14} h={12}>
                  <path d="M0 1.500h8l2 2.500-2 2H0l2-2z" fill="#c4c4c4" />
                  <path d="M5.500 5.500h8v5h-8z" fill="#f4f4f4" stroke="#a0a0a0" />
                  <path d="M7.500 8h4M1 8l2 2" stroke="#a0a0a0" />
                </Icon>
              </SmallButton>
            </Stack>
          </Group>

          <DrawingWrap>
            <DrawingButton aria-expanded="true">
              <div><DrawIcon /></div>
              <Line>绘图</Line>
              <Line><Chevron /></Line>
              <CursorIcon />
            </DrawingButton>
            <Flyout>
              <FlyoutBody>
                <Gallery>
                  <Shapes>
                    <button aria-label="文本框"><TextBoxIcon /></button>
                    <button aria-label="竖排文本框"><TextBoxIcon turned /></button>
                    {shapePaths.map(([label, d]) => (
                      <button key={label} aria-label={label}>
                        <Icon w={14} h={13}><path d={d} /></Icon>
                      </button>
                    ))}
                  </Shapes>
                  <Scroller>
                    <button aria-label="上一行" disabled>
                      <Icon w={7} h={5}><path d="M1 3.500L3.500 1.200 6 3.500" /></Icon>
                    </button>
                    <button aria-label="下一行"><Chevron /></button>
                    <button aria-label="其他">
                      <Icon w={7} h={7}><path d="M0 .5h7M1 3.200l2.500 2.300L6 3.200" /></Icon>
                    </button>
                  </Scroller>
                </Gallery>
                <FlyoutBig $w={42}>
                  <div><ArrangeIcon /></div>
                  <Line>排列</Line>
                  <Chevron />
                </FlyoutBig>
                <FlyoutBig $w={42} disabled>
                  <div><QuickStyleIcon /></div>
                  <Line>快速样式</Line>
                  <Chevron />
                </FlyoutBig>
                <Effects>
                  <Effect disabled><FillIcon />形状填充<Chevron /></Effect>
                  <Effect disabled><OutlineIcon />形状轮廓<Chevron /></Effect>
                  <Effect disabled><EffectIcon />形状效果<Chevron /></Effect>
                </Effects>
              </FlyoutBody>
              <FlyoutFoot>
                绘图
                <Launcher aria-label="绘图设置" disabled><LauncherIcon /></Launcher>
              </FlyoutFoot>
            </Flyout>
          </DrawingWrap>

          <Group w={47} center>
            <BigButton $w={46} $tight>
              <div><SearchIcon /></div>
              <Line>编辑</Line>
              <Line><Chevron /></Line>
            </BigButton>
          </Group>
          <Group w={49} label="语音" center>
            <BigButton $w={46}>
              <div><MicIcon /></div>
              <Line>听写</Line>
              <Line><Chevron /></Line>
            </BigButton>
          </Group>
          <Group w={49} label="设计器" center>
            <BigButton $w={46}>
              <div><DesignerIcon /></div>
              <Line>设</Line>
              <Line>计器</Line>
            </BigButton>
          </Group>
          <Group w={58} label="保存" center>
            <BigButton $w={56}>
              <div><Icon w={22} h={22}><g transform="translate(0 3)"><BaiduIcon /></g></Icon></div>
              <Line>保存到</Line>
              <Line>百度网盘</Line>
            </BigButton>
          </Group>
          <CollapseButton aria-label="折叠功能区">
            <Icon w={8} h={5}><path d="M.8 .8L4 4 7.200 .8" strokeWidth="1.300" /></Icon>
          </CollapseButton>
        </Groups>

        <QuickBar>
          {quickItems.map((q) => (
            <QuickItem key={q.t} disabled={q.off} $space={q.off ? 16 : q.caret ? 9 : 15}>
              <Icon w={14} h={14}>{q.icon}</Icon>
              {q.t}
              {q.caret && <Chevron />}
            </QuickItem>
          ))}
        </QuickBar>
      </RibbonCard>

      <DocBar>
        <HistoryButton aria-label="历史">
          <Icon w={13} h={14}>
            <path d="M4.500 3V.5h5l3 3v9.500h-6M9.500 .5v3h3" stroke="#999" />
            <circle cx="4.500" cy="8" r="4" stroke="#888" />
            <path d="M4.500 5.500V8.500h2" stroke="#888" />
          </Icon>
        </HistoryButton>
        <DocTab>
          <Icon w={13} h={14}>
            <path d="M7 2.500h5.500v10H7" stroke="#d35230" fill="#fff" />
            <path d="M8.500 5.500h2.500M8.500 7.500h2.500M8.500 9.500h2.500" stroke="#d35230" />
            <path d="M0 2l8-1.500v13L0 12z" fill="#c8401f" stroke="none" />
            <WhiteText x="4" y="10" fontSize="8" fontWeight="700" textAnchor="middle">P</WhiteText>
            <circle cx="11.500" cy="1.500" r="1.700" fill="#f03a20" stroke="none" />
          </Icon>
          <DocName>
            <span>演示文稿1</span>
            <span>-</span>
            <span>兼容性模式</span>
          </DocName>
          <button aria-label="关闭文档">
            <Icon w={9} h={9}><path d="M.8 .8l7.400 7.400M8.200 .8L.8 8.200" stroke="#777" /></Icon>
          </button>
          <MoreButton aria-label="更多">
            <Icon w={3} h={10}>
              <path d="M1.500 0v2M1.500 4v2M1.500 8v2" stroke="#666" strokeWidth="1.500" />
            </Icon>
          </MoreButton>
        </DocTab>
        <AddDoc aria-label="新建文档">
          <Icon w={11} h={11}><path d="M5.500 0v11M0 5.500h11" strokeWidth="1.200" /></Icon>
        </AddDoc>
      </DocBar>

      <Workspace>
        <ThumbPane>
          <span>1</span>
          <Thumb aria-label="幻灯片 1" />
        </ThumbPane>
        <Stage>
          <Slide />
        </Stage>
      </Workspace>
    </Page>
  );
}
